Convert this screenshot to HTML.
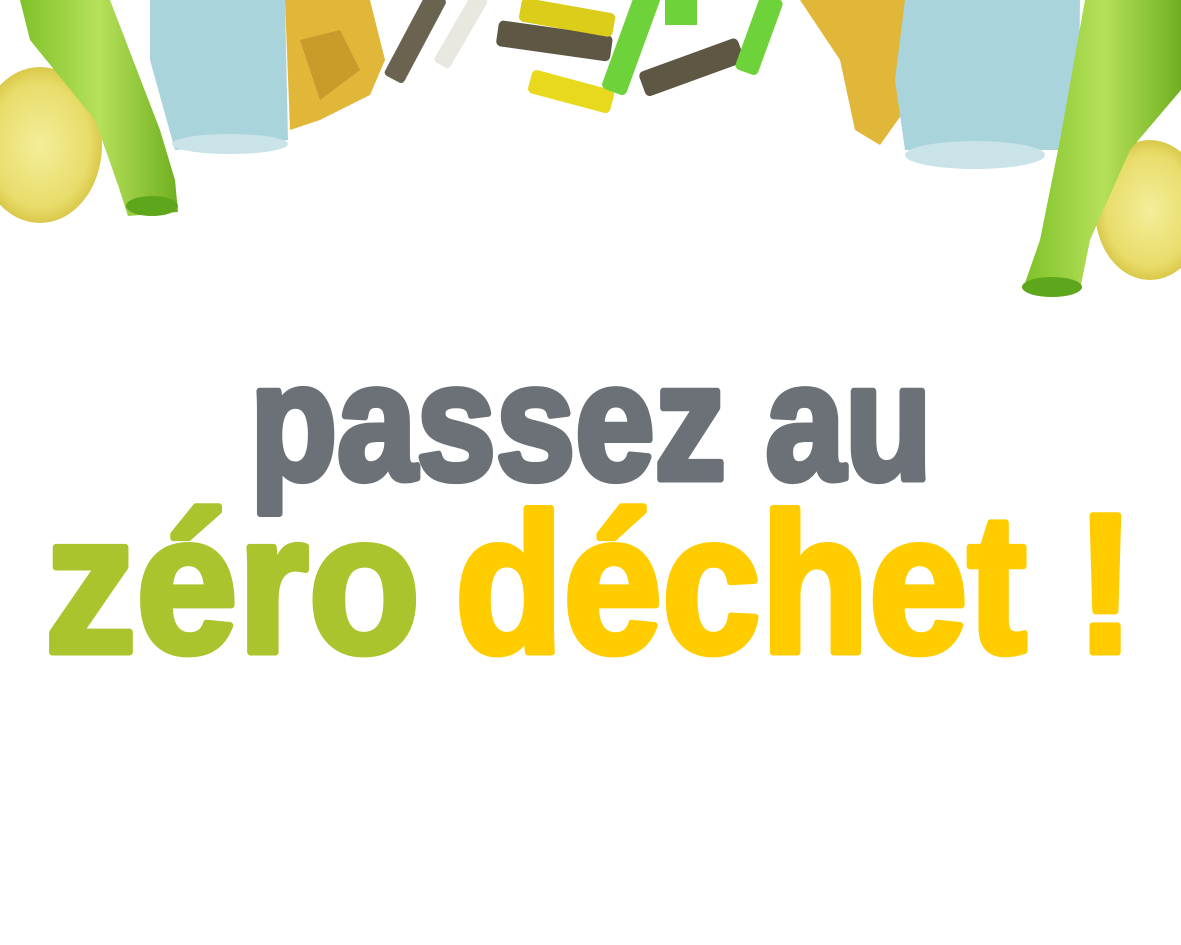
<!DOCTYPE html>
<html><head><meta charset="utf-8"><style>
html,body{margin:0;padding:0;background:#fff;width:1181px;height:945px;overflow:hidden}
svg{display:block}
</style></head><body>
<svg width="1181" height="945" viewBox="0 0 1181 945" xmlns="http://www.w3.org/2000/svg">
<defs>
<radialGradient id="jar" cx="0.5" cy="0.5" r="0.5"><stop offset="0" stop-color="#f4ee9a"/><stop offset="0.8" stop-color="#e8dc6a"/><stop offset="1" stop-color="#d9c84a"/></radialGradient>
<linearGradient id="bot" x1="0" x2="1"><stop offset="0" stop-color="#7fc22a"/><stop offset="0.5" stop-color="#b6e05a"/><stop offset="1" stop-color="#6fb020"/></linearGradient>
</defs>
<ellipse cx="40" cy="145" rx="62" ry="78" fill="url(#jar)"/>
<path d="M20 0 L110 0 L160 130 L175 180 L178 212 L128 216 L118 185 L95 120 L30 40 Z" fill="url(#bot)"/>
<ellipse cx="152" cy="206" rx="26" ry="10" fill="#5ea61c"/>
<path d="M150 0 L285 0 L288 140 L175 150 L150 60 Z" fill="#a9d4dc"/>
<ellipse cx="230" cy="144" rx="58" ry="10" fill="#c9e3e8"/>
<path d="M285 0 L370 0 L385 60 L370 95 L320 120 L290 130 Z" fill="#e1b73a"/>
<path d="M300 40 L340 30 L360 70 L320 100 Z" fill="#b58a22" opacity="0.6"/>
<g transform="rotate(-62 415 40)"><rect x="370" y="28" width="95" height="22" rx="4" fill="#6a6350"/></g>
<g transform="rotate(-60 460 30)"><rect x="420" y="22" width="80" height="18" rx="4" fill="#e8e8e0"/></g>
<g transform="rotate(8 555 40)"><rect x="497" y="28" width="115" height="26" rx="5" fill="#5e5744"/></g>
<g transform="rotate(10 565 15)"><rect x="520" y="5" width="95" height="24" rx="5" fill="#dccd1a"/></g>
<g transform="rotate(15 580 95)"><rect x="528" y="82" width="85" height="24" rx="5" fill="#e9d91c"/></g>
<g transform="rotate(-70 630 45)"><rect x="580" y="32" width="110" height="26" rx="5" fill="#6ed23a"/></g>
<g transform="rotate(-20 690 70)"><rect x="640" y="55" width="105" height="26" rx="5" fill="#5e5744"/></g>
<g transform="rotate(-70 760 35)"><rect x="720" y="22" width="80" height="24" rx="5" fill="#6ed23a"/></g>
<rect x="665" y="0" width="32" height="25" fill="#6ed23a"/>
<path d="M800 0 L915 0 L905 110 L880 145 L855 130 L840 60 Z" fill="#e1b73a"/>
<path d="M905 0 L1080 0 L1078 150 L905 150 L895 80 Z" fill="#a9d4dc"/>
<ellipse cx="975" cy="155" rx="70" ry="14" fill="#c9e3e8"/>
<ellipse cx="1150" cy="210" rx="55" ry="70" fill="url(#jar)"/>
<path d="M1085 0 L1181 0 L1181 90 L1130 150 L1090 240 L1080 290 L1025 283 L1040 240 L1060 140 Z" fill="url(#bot)"/>
<ellipse cx="1052" cy="287" rx="30" ry="10" fill="#5ea61c"/>
<g font-family="Liberation Sans, sans-serif" font-weight="bold" stroke-linejoin="round">
<text x="250" y="479" font-size="166" fill="#6b7177" stroke="#6b7177" stroke-width="7" textLength="682" lengthAdjust="spacingAndGlyphs">passez au</text>
<text x="45" y="652" font-size="198" fill="#aac42e" stroke="#aac42e" stroke-width="7" textLength="375" lengthAdjust="spacingAndGlyphs">zéro</text>
<text x="455" y="652" font-size="198" fill="#ffcc00" stroke="#ffcc00" stroke-width="7" textLength="680" lengthAdjust="spacingAndGlyphs">déchet !</text>
</g>
</svg>
</body></html>
